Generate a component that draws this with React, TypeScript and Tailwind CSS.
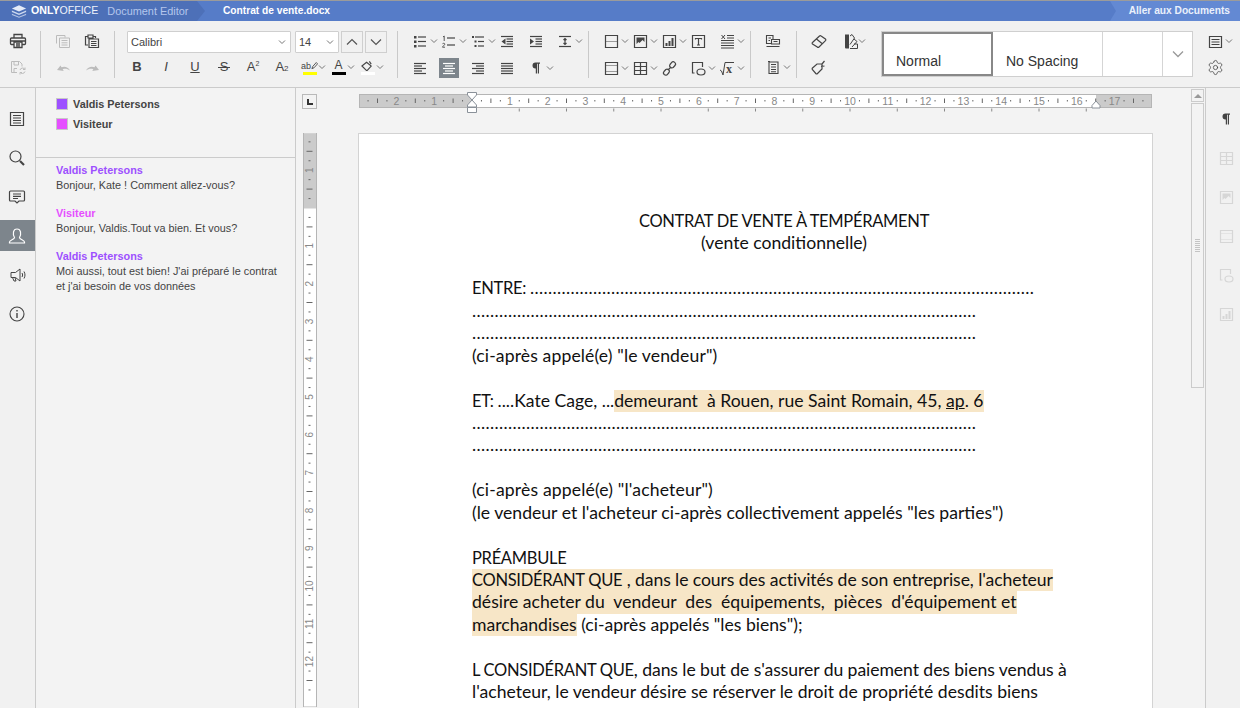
import type { ReactNode } from "react";
import { Settings } from "lucide-react";

function Ic({ children, sw = 1.2 }: { children: ReactNode; sw?: number }) {
  return (
    <svg viewBox="0 0 20 20" fill="none" stroke="currentColor" strokeWidth={sw} className="h-5 w-5 shrink-0">
      {children}
    </svg>
  );
}

function Lines({ rows }: { rows: [number, number, number][] }) {
  return (
    <>
      {rows.map(([x1, x2, y]) => (
        <path key={`${x1}-${x2}-${y}`} d={`M${x1} ${y}H${x2}`} />
      ))}
    </>
  );
}

const box = "M4.5 4.5h12v12h-12z";

const icons: Record<string, ReactNode> = {
  print: (
    <Ic sw={1.3}>
      <path d="M7 7V3.5h8V7M7 13.5H4.5A1 1 0 0 1 3.5 12.5V8A1 1 0 0 1 4.5 7h13A1 1 0 0 1 18.5 8v4.5a1 1 0 0 1-1 1H15" />
      <path d="M7 11h8v5.5H7zM3.5 10h15M9 13h4M9 14.8h4" />
    </Ic>
  ),
  save: (
    <Ic sw={1}>
      <path d="M10 15.5H4.5V4.5h8l2.5 2.5v2.5M7 4.5v3.5h4.5V4.5M7 15.5v-4h3" />
      <path d="M13 13a2.7 2.7 0 0 1 5-.5M18 14.5a2.7 2.7 0 0 1-5 .5M18 10.5v2h-2M13 17.5v-2h2" />
    </Ic>
  ),
  copy: (
    <Ic sw={1}>
      <path d="M3.5 12.5v-8H12v2M6.5 7h10v9.5h-10zM8.5 9.5h6M8.5 11.8h6M8.5 14h6" />
    </Ic>
  ),
  paste: (
    <Ic sw={1.2}>
      <path d="M6 14H3.5V5.5H6M11 5.500h2.5V7M6 4h5v3H6zM7 8h9.5v8.5H7zM9 10.5h5.5M9 12.5h5.5M9 14.5h5.5" />
    </Ic>
  ),
  undo: (
    <svg viewBox="0 0 20 20" fill="currentColor" className="h-5 w-5 shrink-0">
      <path d="M4 12l3.5-4.5 1 1.8c3-1.2 6.5-.5 8.5 3.2-2.5-1.8-5-2.2-7.3-1.3l1 1.8z" />
    </svg>
  ),
  redo: (
    <svg viewBox="0 0 20 20" fill="currentColor" className="h-5 w-5 shrink-0">
      <path d="M17 12l-3.5-4.5-1 1.8c-3-1.2-6.5-.5-8.5 3.2 2.5-1.8 5-2.2 7.3-1.3l-1 1.8z" />
    </svg>
  ),
  bullets: (
    <Ic>
      <Lines rows={[[8, 16, 6], [8, 16, 10.5], [8, 16, 15]]} />
      <path fill="currentColor" stroke="none" d="M4 5h2.5v2.5H4zM4 9.5h2.5V12H4zM4 14h2.5v2.5H4z" />
    </Ic>
  ),
  numbers: (
    <Ic>
      <Lines rows={[[8, 16, 7], [8, 16, 14]]} />
      <path strokeWidth={0.9} d="M4 6l1.2-1v5M3.5 13c.4-1 2.4-.9 2.3.2-.1.8-2.3 2.2-2.3 3H6" />
    </Ic>
  ),
  multi: (
    <Ic>
      <Lines rows={[[7, 16, 6], [10, 16, 10.5], [10, 16, 15]]} />
      <path fill="currentColor" stroke="none" d="M4 5h2v2H4zM6.5 9.5h2v2h-2zM6.5 14h2v2h-2z" />
    </Ic>
  ),
  outdent: (
    <Ic>
      <Lines rows={[[4, 16, 5.5], [9.5, 16, 8], [9.5, 16, 10.5], [9.5, 16, 13], [4, 16, 15.5]]} />
      <path fill="currentColor" stroke="none" d="M8.5 7.500v6l-4-3z" />
    </Ic>
  ),
  indent: (
    <Ic>
      <Lines rows={[[4, 16, 5.5], [9.5, 16, 8], [9.5, 16, 10.5], [9.5, 16, 13], [4, 16, 15.5]]} />
      <path fill="currentColor" stroke="none" d="M4 7.5v6l4-3z" />
    </Ic>
  ),
  spacing: (
    <Ic>
      <Lines rows={[[4, 16, 5.5], [4, 16, 15.5]]} />
      <path d="M10 7.5v6M8.5 9L10 7.5 11.5 9M8.5 12l1.5 1.5 1.5-1.5" />
    </Ic>
  ),
  left: <Ic><Lines rows={[[4, 16, 5.5], [4, 12, 8], [4, 16, 10.5], [4, 12, 13], [4, 16, 15.5]]} /></Ic>,
  center: <Ic><Lines rows={[[4, 16, 5.5], [6, 14, 8], [4, 16, 10.5], [6, 14, 13], [4, 16, 15.5]]} /></Ic>,
  right: <Ic><Lines rows={[[4, 16, 5.5], [8, 16, 8], [4, 16, 10.5], [8, 16, 13], [4, 16, 15.5]]} /></Ic>,
  justify: <Ic><Lines rows={[[4, 16, 5.5], [4, 16, 8], [4, 16, 10.5], [4, 16, 13], [4, 16, 15.5]]} /></Ic>,
  para: (
    <Ic>
      <path fill="currentColor" stroke="none" d="M9.5 4.5H14v1.2h-1v9.8h-1.2V5.7H11v9.8H9.8v-5h-.3a3 3 0 0 1 0-6z" />
    </Ic>
  ),
  pagebreak: (
    <Ic>
      <path d={box} />
      <path strokeDasharray="1 1" d="M4.5 10.5h12" />
    </Ic>
  ),
  image: (
    <Ic>
      <path d={box} />
      <path fill="currentColor" stroke="none" d="M6.5 6.5h8V11l-2-2-3 3-1-1-2 2z" />
    </Ic>
  ),
  chart: (
    <Ic>
      <path d={box} />
      <path fill="currentColor" stroke="none" d="M6.5 12h2v3h-2zM9.5 10h2v5h-2zM12.5 7h2v8h-2z" />
    </Ic>
  ),
  textbox: (
    <Ic>
      <path d={box} />
      <path d="M7.5 8.5v-1h6v1M10.5 7.5V14M9 14h3" />
    </Ic>
  ),
  columns: (
    <Ic sw={1}>
      <Lines rows={[[10, 17, 4.5], [10, 17, 7], [4, 17, 9.5], [4, 17, 12], [4, 17, 14.5], [4, 17, 17]]} />
      <path d="M4.5 4L8 8M8 4L4.5 8" />
    </Ic>
  ),
  margins: (
    <Ic>
      <path d={box} />
      <path strokeDasharray="1 1" d="M4.5 7.5h12M4.5 13.5h12" />
    </Ic>
  ),
  table: (
    <Ic>
      <path d={box} />
      <path d="M4.5 8.5h12M4.5 12.5h12M10.5 4.5v12" />
    </Ic>
  ),
  link: (
    <Ic>
      <path d="M9 12l3-3M11 6.5l1.5-1.8A2.2 2.2 0 0 1 16 7.5l-1.8 2a2.2 2.2 0 0 1-2.7-.3l-.8-.8a2.2 2.2 0 0 1 .3-1.9zM10 14.5l-1.5 1.8A2.2 2.2 0 0 1 5 13.5l1.800-2a2.2 2.2 0 0 1 2.7.3l.8.8a2.2 2.2 0 0 1-.3 1.9z" />
    </Ic>
  ),
  shape: (
    <Ic>
      <path d="M6.5 15h-2V4.5h10V9" />
      <ellipse cx="13" cy="14" rx="4" ry="3" />
    </Ic>
  ),
  equation: (
    <Ic sw={1}>
      <path d="M3 12l1.5 1L6 17 8 4.500h9" />
      <text x="9" y="15" fontFamily="'Liberation Serif', serif" fontSize="12" fontWeight="700" fill="currentColor" stroke="none">x</text>
    </Ic>
  ),
  layout: (
    <Ic sw={1.1}>
      <path d="M8 12.5H3.5v-8H10V8M8.5 8.5h8V13h-8zM5.5 7H8M5.5 9.5H7M3.5 15.5h13M10.500 10.500h4" />
    </Ic>
  ),
  toc: (
    <Ic sw={1.1}>
      <path d="M6 5h9v11.5H6zM8 7.5h5M8 10h5M8 12.5h5M8 14.7h5M5 4.5h2" />
    </Ic>
  ),
  eraser: (
    <Ic>
      <path d="M3.5 11.5l7-6.500a1.2 1.2 0 0 1 1.6 0l4.300 3a1.2 1.2 0 0 1 .1 1.7L10 16a1.2 1.2 0 0 1-1.7 0l-4.800-3a1 1 0 0 1 0-1.500zM7.500 8l5.500 4.500" />
    </Ic>
  ),
  copyStyle: (
    <Ic>
      <path d="M3.5 11L8 7h5v5l-4.500 4.500a1.2 1.2 0 0 1-1.700 0L3.500 12.700a1.2 1.2 0 0 1 0-1.700zM13 7l2.500-3M12 9.500l3.500-.5" />
    </Ic>
  ),
  scheme: (
    <Ic sw={1}>
      <path fill="currentColor" stroke="none" d="M7 3.5h4v14H8a1 1 0 0 1-1-1z" />
      <path d="M12 5l2-1.500L16.500 7 12 13.500M12 17.500h7.500V13H16M16 8l3 2.500-5 5.500" />
    </Ic>
  ),
  listbox: (
    <Ic>
      <path d="M4.5 5.5h12v11h-12zM6.5 8.5h8M6.5 11h8M6.5 13.5h8" />
    </Ic>
  ),
  search: (
    <Ic sw={1.2}>
      <circle cx="8.5" cy="8.5" r="5.5" />
      <path strokeWidth={2.2} d="M13 13l4 4" />
    </Ic>
  ),
  comment: (
    <Ic sw={1.2}>
      <path d="M3.5 4h13a1 1 0 0 1 1 1v8a1 1 0 0 1-1 1H12l-2 2-2-2H3.500a1 1 0 0 1-1-1V5a1 1 0 0 1 1-1zM6 7h8M6 9.3h8M6 11.5h5" />
    </Ic>
  ),
  user: (
    <Ic sw={1.2}>
      <path d="M7.5 11.5C5.5 8 6 3 10 3s4.500 5 2.500 8.500c0 2 5 2.500 5 4.500v1h-15v-1c0-2 5-2.500 5-4.500z" />
    </Ic>
  ),
  speaker: (
    <Ic sw={1}>
      <path d="M4 7.5h4.5L13 4v12l-4.500-3.500H4zM5.500 12.500L7 16h2l-1-3.500M15 8c.8 1.300.8 2.700 0 4M17 6.500c1.300 2.300 1.300 4.700 0 7" />
    </Ic>
  ),
  info: (
    <Ic sw={1.1}>
      <circle cx="10" cy="10" r="7" />
      <path strokeWidth={1.4} d="M10 9v5M10 6v1.500" />
    </Ic>
  ),
  doc: (
    <Ic sw={1.2}>
      <path d="M3.5 3.5h13v13h-13zM6 6.5h8M6 9h8M6 11.5h8M6 14h8" />
    </Ic>
  ),
};

function Chevron({ size = 8 }: { size?: number }) {
  return (
    <svg viewBox="0 0 8 8" width={size} height={size} fill="none" stroke="#777" strokeWidth="1" className="shrink-0">
      <path d="M1 2.5l3 3 3-3" />
    </svg>
  );
}

function Tool({ icon, arrow, muted }: { icon: string; arrow?: boolean; muted?: boolean }) {
  return (
    <div className={`flex h-5 w-[29px] items-center pl-1 ${muted ? "text-[#bcbcbc]" : "text-[#444]"}`}>
      {icons[icon]}
      {arrow && <Chevron />}
    </div>
  );
}

function TextTool({ children, className }: { children: ReactNode; className?: string }) {
  return (
    <div className={`relative flex h-5 w-[29px] items-center justify-center pr-[1px] text-[13px] text-[#444] ${className ?? ""}`}>
      {children}
    </div>
  );
}

function ColorTool({ bar, children }: { bar: string; children: ReactNode }) {
  return (
    <div className="flex h-5 w-[29px] items-center pl-1 text-[#444]">
      <div className="flex h-5 w-5 flex-col items-center justify-end">
        {children}
        <div className={`mb-[2px] h-[3px] w-[14px] ${bar}`} />
      </div>
      <Chevron />
    </div>
  );
}

function Sep() {
  return <div className="h-full w-px shrink-0 bg-[#c9c9c9]" />;
}

function ComboBox({ value, className }: { value: string; className: string }) {
  return (
    <div className={`flex h-[22px] shrink-0 items-center justify-between rounded-[1px] border border-[#cfcfcf] bg-white pl-[3px] pr-[4px] text-[11px] text-[#444] ${className}`}>
      {value}
      <Chevron />
    </div>
  );
}

function SquareBtn({ up }: { up?: boolean }) {
  return (
    <div className="ml-[2px] flex h-[22px] w-[22px] shrink-0 items-center justify-center border border-[#cfcfcf]">
      <svg viewBox="0 0 12 12" width="12" height="12" fill="none" stroke="#555" strokeWidth="1.2">
        <path d={up ? "M1 8.5l5-5 5 5" : "M1 3.5l5 5 5-5"} />
      </svg>
    </div>
  );
}

function Toolbar() {
  return (
    <div className="flex h-[67px] shrink-0 border-b border-[#cbcbcb] bg-[#f1f1f1] pb-[9px] pl-[3px] pt-[10px]">
      <div className="flex w-[29px] flex-col gap-[6px]">
        <Tool icon="print" />
        <Tool icon="save" muted />
      </div>
      <div className="ml-2"><Sep /></div>
      <div className="ml-2 grid grid-cols-2 gap-y-[6px]">
        <Tool icon="copy" muted />
        <Tool icon="paste" />
        <Tool icon="undo" muted />
        <Tool icon="redo" muted />
      </div>
      <div className="ml-[7px]"><Sep /></div>
      <div className="ml-2 flex w-[263px] flex-col gap-[6px]">
        <div className="ml-1 flex h-5">
          <ComboBox value="Calibri" className="w-[164px]" />
          <ComboBox value="14" className="ml-1 w-[44px]" />
          <SquareBtn up />
          <SquareBtn />
        </div>
        <div className="flex">
          <TextTool className="font-bold">B</TextTool>
          <TextTool className="italic">I</TextTool>
          <TextTool className="underline">U</TextTool>
          <TextTool>
            S
            <div className="absolute left-[8px] top-[10px] h-px w-[12px] bg-[#444]" />
          </TextTool>
          <TextTool>A<sup className="text-[7px]">2</sup></TextTool>
          <TextTool>A<sub className="text-[8px]">2</sub></TextTool>
          <ColorTool bar="bg-[#ffff00]">
            <div className="flex h-[12px] items-center">
              <span className="text-[9px] leading-[12px]">ab</span>
              <svg viewBox="0 0 8 10" width="7" height="10" fill="none" stroke="#444" strokeWidth="1">
                <path d="M1 8l1-2.5L6 1l1.500 1.500L3.500 7z" />
              </svg>
            </div>
          </ColorTool>
          <ColorTool bar="bg-black">
            <span className="text-[12px] leading-[13px]">A</span>
          </ColorTool>
          <ColorTool bar="bg-white">
            <svg viewBox="0 0 14 12" width="13" height="12" fill="none" stroke="#444" strokeWidth="1.2">
              <path d="M1 6l5-4 5 4-4 4.500a1 1 0 0 1-1.500 0zM9 1l2 3" />
            </svg>
          </ColorTool>
        </div>
      </div>
      <div className="ml-[11px]"><Sep /></div>
      <div className="ml-2 grid grid-cols-6 gap-y-[6px]">
        <Tool icon="bullets" arrow />
        <Tool icon="numbers" arrow />
        <Tool icon="multi" arrow />
        <Tool icon="outdent" />
        <Tool icon="indent" />
        <Tool icon="spacing" arrow />
        <Tool icon="left" />
        <div className="flex h-5 w-[29px] pl-1 text-white">
          <div className="bg-[#7d858c]">{icons.center}</div>
        </div>
        <Tool icon="right" />
        <Tool icon="justify" />
        <Tool icon="para" arrow />
      </div>
      <div className="ml-2"><Sep /></div>
      <div className="ml-2 grid grid-cols-5 gap-y-[6px]">
        <Tool icon="pagebreak" arrow />
        <Tool icon="image" arrow />
        <Tool icon="chart" arrow />
        <Tool icon="textbox" />
        <Tool icon="columns" arrow />
        <Tool icon="margins" arrow />
        <Tool icon="table" arrow />
        <Tool icon="link" />
        <Tool icon="shape" arrow />
        <Tool icon="equation" arrow />
      </div>
      <div className="ml-2"><Sep /></div>
      <div className="ml-2 flex w-[29px] flex-col gap-[6px]">
        <Tool icon="layout" />
        <Tool icon="toc" arrow />
      </div>
      <div className="ml-2"><Sep /></div>
      <div className="ml-2 grid w-[58px] grid-cols-2 content-start gap-y-[6px]">
        <Tool icon="eraser" />
        <Tool icon="scheme" arrow />
        <Tool icon="copyStyle" />
      </div>
      <div className="ml-[18px] flex h-[46px] w-[312px] border border-[#cfcfcf] bg-white text-[14px] text-[#333]">
        <div className="flex w-[111px] items-end border-2 border-[#888] pb-[2px] pl-3">Normal</div>
        <div className="flex w-[110px] items-end border-r border-[#d5d5d5] pb-[4px] pl-[13px]">No Spacing</div>
        <div className="w-[60px] border-r border-[#d5d5d5]" />
        <div className="flex flex-1 items-center justify-center">
          <svg viewBox="0 0 12 12" width="12" height="12" fill="none" stroke="#999" strokeWidth="1.3">
            <path d="M1 3.5l5 5 5-5" />
          </svg>
        </div>
      </div>
      <div className="ml-2 flex w-[29px] flex-col gap-[6px]">
        <Tool icon="listbox" arrow />
        <div className="flex h-5 items-center pl-[4px] text-[#444]">
          <div className="flex h-5 w-5 items-center justify-center">
            <Settings size={17} strokeWidth={1.1} />
          </div>
        </div>
      </div>
    </div>
  );
}

function Header() {
  return (
    <div className="flex h-[21px] shrink-0 items-stretch border-t border-[#9b9b9b] bg-[#567cc8] text-[10.2px] font-bold">
      <div className="flex w-[197px] items-center bg-[#4d70b8] pl-[11px]">
        <svg viewBox="0 0 18 14" width="16" height="13" fill="#e4ebf8">
          <path d="M9 0l8 3.5-8 3.5-8-3.5z" />
          <path opacity=".85" d="M1 6l8 3.300L17 6v1.500l-8 3.400-8-3.400z" />
          <path opacity=".7" d="M1 9.500l8 3.300 8-3.300V11l-8 3-8-3z" />
        </svg>
        <span className="ml-1 text-[10.6px] text-white">ONLY<span className="font-normal text-[#eef2fb]">OFFICE</span></span>
        <span className="ml-[9px] text-[10.9px] font-normal text-[#b4c6ec]">Document Editor</span>
      </div>
      <div className="h-full w-0 border-y-[10px] border-l-[8px] border-y-transparent border-l-[#4d70b8]" />
      <div className="ml-[18px] flex items-center text-white">Contrat de vente.docx</div>
      <div className="ml-auto h-full w-0 border-y-[10px] border-l-[6px] border-y-[#6389d3] border-l-transparent" />
      <div className="flex w-[124px] items-center justify-end bg-[#6389d3] pr-[10px] text-[#eaf0fb]">Aller aux Documents</div>
    </div>
  );
}

const leftBar = ["doc", "search", "comment", "user", "speaker", "info"];

function LeftBar() {
  return (
    <div className="flex w-9 shrink-0 flex-col gap-2 border-r border-[#cbcbcb] bg-[#f1f1f1] pt-[15px]">
      {leftBar.map((name) => (
        <div
          key={name}
          className={`flex h-[31px] items-center justify-center pr-[2px] ${name === "user" ? "bg-[#7d858c] text-white" : "text-[#444]"}`}
        >
          {icons[name]}
        </div>
      ))}
    </div>
  );
}

const messages = [
  { name: "Valdis Petersons", color: "text-[#9d50ff]", lines: ["Bonjour, Kate ! Comment allez-vous?"] },
  { name: "Visiteur", color: "text-[#e54fff]", lines: ["Bonjour, Valdis.Tout va bien. Et vous?"] },
  {
    name: "Valdis Petersons",
    color: "text-[#9d50ff]",
    lines: ["Moi aussi, tout est bien! J'ai préparé le contrat", "et j'ai besoin de vos données"],
  },
];

function ChatPanel() {
  return (
    <div className="flex w-[260px] shrink-0 flex-col border-r border-[#cbcbcb] bg-[#f3f3f3] text-[10.85px] text-[#444]">
      <div className="flex h-[70px] shrink-0 flex-col gap-2 border-b border-[#cbcbcb] pl-[20px] pt-[10px]">
        <div className="flex h-3 items-center gap-[5px] font-bold">
          <div className="h-3 w-3 border border-[#c8c8c8] bg-[#9d50ff]" />
          Valdis Petersons
        </div>
        <div className="flex h-3 items-center gap-[5px] font-bold">
          <div className="h-3 w-3 border border-[#c8c8c8] bg-[#e54fff]" />
          Visiteur
        </div>
      </div>
      <div className="flex flex-col gap-[13px] pl-[20px] pt-[5px] leading-[15px]">
        {messages.map((m) => (
          <div key={m.lines[0]}>
            <div className={`font-bold ${m.color}`}>{m.name}</div>
            {m.lines.map((l) => (
              <div key={l}>{l}</div>
            ))}
          </div>
        ))}
      </div>
    </div>
  );
}

const CM = 37.8;
const labelCm = Array.from({ length: 21 }, (_, i) => i - 3);

function HRuler() {
  const origin = 113;
  const tabs = Array.from({ length: 13 }, (_, i) => origin + (i + 1) * 47.25);
  const inside = (x: number) => x > 0 && x < 790;
  return (
    <svg width="793" height="14" className="shrink-0 overflow-visible">
      <rect x="0.5" y="0.5" width="792" height="13" fill="#cbcbcb" stroke="#b5b5b5" />
      <rect x={origin} y="1" width="624" height="12" fill="#fff" />
      <path d={`M${origin} 13.5H737M${origin} 0.5H737`} stroke="#b5b5b5" />
      {labelCm.map((k) => {
        const x = origin + k * CM;
        return (
          <g key={k}>
            {k !== 0 && inside(x) && (
              <text x={x} y="10.5" textAnchor="middle" fontSize="10.5" fill="#888" fontFamily="'Liberation Sans', sans-serif">
                {Math.abs(k)}
              </text>
            )}
            {inside(x + CM * 0.25) && <path d={`M${x + CM * 0.25} 6v1.5`} stroke="#666" />}
            {inside(x + CM * 0.5) && <path d={`M${x + CM * 0.5} 4.5v4.5`} stroke="#666" />}
            {inside(x + CM * 0.75) && <path d={`M${x + CM * 0.75} 6v1.5`} stroke="#666" />}
          </g>
        );
      })}
      {tabs.map((x) => (
        <path key={x} d={`M${x} 14.5v3`} stroke="#888" />
      ))}
      <path d={`M${origin - 4.5} -1.5h9V1l-4.5 5-4.5-5z`} fill="#fff" stroke="#8a9199" />
      <path d={`M${origin} 6l4.5 5v2h-9v-2z`} fill="#fff" stroke="#8a9199" />
      <path d={`M${origin - 4.5} 13.5h9v5h-9z`} fill="#fff" stroke="#8a9199" />
      <path d="M737 7l4 4.5V14h-8v-2.500z" fill="#fff" stroke="#8a9199" />
    </svg>
  );
}

function VRuler() {
  const origin = 75;
  const rows = Array.from({ length: 15 }, (_, i) => i - 2);
  return (
    <svg width="14" height="574" className="shrink-0">
      <rect x="0.5" y="0" width="13" height="574" fill="#fff" stroke="#b5b5b5" />
      <rect x="1" y="0.5" width="12" height={origin} fill="#cbcbcb" />
      {rows.map((k) => {
        const y = origin + k * CM;
        return (
          <g key={k}>
            {k !== 0 && k > -2 && (
              <text
                x="6.5"
                y={y + 3.5}
                textAnchor="middle"
                fontSize="10"
                fill="#888"
                fontFamily="'Liberation Sans', sans-serif"
                transform={`rotate(-90 6.5 ${y})`}
              >
                {Math.abs(k)}
              </text>
            )}
            <path d={`M5.5 ${y + CM * 0.25}h2`} stroke="#666" />
            <path d={`M3.5 ${y + CM * 0.5}h6`} stroke="#666" />
            <path d={`M5.5 ${y + CM * 0.75}h2`} stroke="#666" />
          </g>
        );
      })}
    </svg>
  );
}

function Hl({ children }: { children: ReactNode }) {
  return <span className="inline-block bg-[#f7e6c7]">{children}</span>;
}

function Caps({ children }: { children: ReactNode }) {
  return <span className="text-[16.5px] tracking-[-0.3px]">{children}</span>;
}

function Dots({ n }: { n: number }) {
  return <span className="tracking-[0.35px]">{".".repeat(n)}</span>;
}

function Line({ children, className }: { children?: ReactNode; className?: string }) {
  return <div className={`h-[22.45px] whitespace-pre ${className ?? ""}`}>{children}</div>;
}

function Page() {
  return (
    <div className="ml-[41px] h-[600px] w-[795px] shrink-0 border border-[#d3d3d3] bg-white pl-[113px] pt-[76px] font-['Lato',sans-serif] text-[17.6px] leading-[22.45px] text-[#111]">
      <div className="w-[624px]">
        <Line className="text-center"><Caps>CONTRAT DE VENTE À TEMPÉRAMENT</Caps></Line>
        <Line className="text-center">(vente conditionnelle)</Line>
        <Line />
        <Line><Caps>ENTRE: </Caps><Dots n={112} /></Line>
        <Line><Dots n={112} /></Line>
        <Line><Dots n={112} /></Line>
        <Line className="tracking-[0.12px]">(ci-après appelé(e) "le vendeur")</Line>
        <Line />
        <Line><Caps>ET: </Caps>....Kate Cage, ...<Hl>demeurant  à Rouen, rue Saint Romain, 45, <span className="underline">ap</span>. 6</Hl></Line>
        <Line><Dots n={112} /></Line>
        <Line><Dots n={112} /></Line>
        <Line />
        <Line className="tracking-[0.15px]">(ci-après appelé(e) "l'acheteur")</Line>
        <Line>(le vendeur et l'acheteur ci-après collectivement appelés "les parties")</Line>
        <Line />
        <Line><Caps>PRÉAMBULE</Caps></Line>
        <Line className="tracking-[-0.08px]"><Hl><Caps>CONSIDÉRANT QUE</Caps> , dans le cours des activités de son entreprise, l'acheteur</Hl></Line>
        <Line><Hl>désire acheter du  vendeur  des  équipements,  pièces  d'équipement et</Hl></Line>
        <Line><Hl>marchandises</Hl> (ci-après appelés "les biens");</Line>
        <Line />
        <Line className="tracking-[-0.07px]"><Caps>L CONSIDÉRANT QUE</Caps>, dans le but de s'assurer du paiement des biens vendus à</Line>
        <Line>l'acheteur, le vendeur désire se réserver le droit de propriété desdits biens</Line>
      </div>
    </div>
  );
}

function Scrollbar() {
  return (
    <div className="flex w-[15px] shrink-0 flex-col gap-px pl-px pt-px">
      <div className="flex h-[13px] w-[13px] items-center justify-center border border-[#cbcbcb]">
        <div className="h-0 w-0 border-x-[4px] border-b-[4px] border-x-transparent border-b-[#999]" />
      </div>
      <div className="flex h-[285px] w-[13px] flex-col items-center justify-center gap-px border border-[#cbcbcb]">
        {[0, 1, 2, 3, 4, 5, 6].map((i) => (
          <div key={i} className="h-px w-[5px] bg-[#c4c4c4]" />
        ))}
      </div>
    </div>
  );
}

const rightBar = ["para", "table", "image", "margins", "shape", "chart"];

function RightBar() {
  return (
    <div className="flex w-[35px] shrink-0 flex-col gap-2 border-l border-[#cbcbcb] bg-[#f1f1f1] pt-[15px]">
      {rightBar.map((name) => (
        <div
          key={name}
          className={`flex h-[31px] items-center justify-center pl-[6px] ${name === "para" ? "text-[#444]" : "text-[#d6d6d6]"}`}
        >
          {icons[name]}
        </div>
      ))}
    </div>
  );
}

export default function App() {
  return (
    <div className="flex h-[708px] w-[1240px] flex-col overflow-hidden bg-[#f3f3f3] font-['Liberation_Sans',Arial,sans-serif]">
      <Header />
      <Toolbar />
      <div className="flex min-h-0 flex-1">
        <LeftBar />
        <ChatPanel />
        <div className="flex w-[894px] shrink-0 flex-col overflow-hidden pt-[6px]">
          <div className="flex h-[14px] shrink-0">
            <div className="ml-[6px] flex h-[15px] w-[15px] items-center justify-center border border-[#b9b9b9]">
              <div className="h-[6px] w-[6px] border-b-2 border-l-2 border-[#333]" />
            </div>
            <div className="ml-[42px]"><HRuler /></div>
          </div>
          <div className="mt-[25px] flex pl-[7px]">
            <VRuler />
            <Page />
          </div>
        </div>
        <Scrollbar />
        <RightBar />
      </div>
    </div>
  );
}
